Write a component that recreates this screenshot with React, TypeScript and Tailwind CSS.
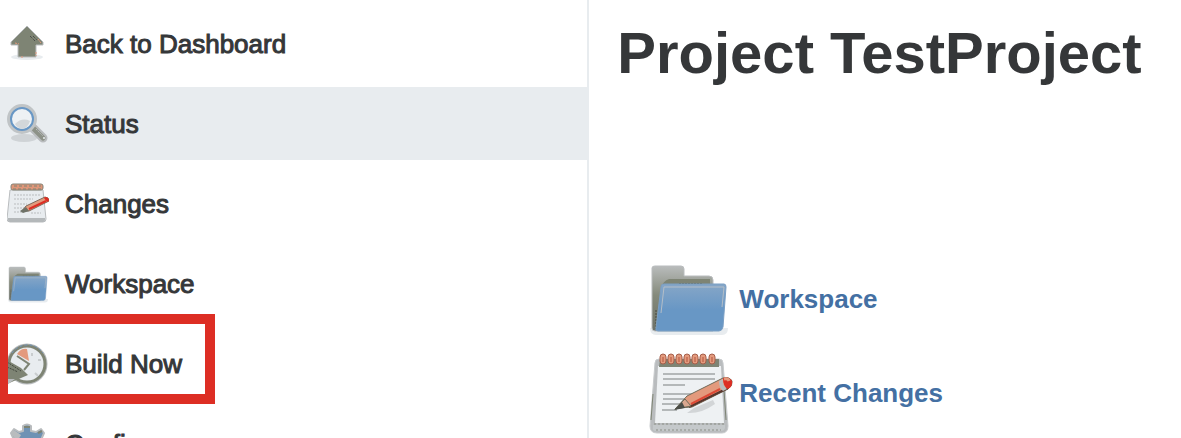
import type { ReactNode } from "react";

function UpIcon() {
  return (
    <svg viewBox="0 0 42 42" className="size-[42px]" aria-hidden="true">
      <ellipse cx="20" cy="34" rx="16" ry="3" fill="#e8ecef" />
      <path d="M20 3 L36 19 V22 H29 V34 H11 V22 H4 V19 Z" fill="#7e8474" stroke="#b9bcbe" strokeWidth="1" strokeLinejoin="round" />
      <path d="M23 13 l5 5 M26 13 l4 4" stroke="#353739" strokeWidth="1" strokeDasharray="1 1" />
      <path d="M8 20 l4 1 M31 16 l3 4 M29 29 v4 M14 34 h3" stroke="#e39a7d" strokeWidth="1" strokeDasharray="2 1" />
    </svg>
  );
}

function SearchIcon() {
  return (
    <svg viewBox="0 0 42 42" className="size-[42px]" aria-hidden="true">
      <ellipse cx="17" cy="35" rx="13" ry="4" fill="#cfd3d6" />
      <path d="M25 24 L36 35" stroke="#b9bcbe" strokeWidth="9" strokeLinecap="round" />
      <path d="M27 26 L36 35" stroke="#8d9288" strokeWidth="5" strokeLinecap="round" />
      <path d="M29 26 L36 33" stroke="#b9bcbe" strokeWidth="1" strokeDasharray="2 1" />
      <circle cx="37" cy="35" r="1" fill="#e8ecef" />
      <circle cx="15" cy="16" r="13" fill="#e8ecef" stroke="#c0c4c6" strokeWidth="4" />
      <circle cx="15" cy="16" r="11" fill="#eef1f4" stroke="#6897c5" strokeWidth="2" />
      <path d="M8 21 Q15 14 23 18 Q21 25 15 26 Q10 25 8 21" fill="#d3d7da" />
    </svg>
  );
}

function NotesIcon() {
  return (
    <svg viewBox="0 0 42 42" className="size-[42px]" aria-hidden="true">
      <path d="M3 7 L36 7 L39 36 Q39 39 36 39 H3 Q0 39 0 36 Z" fill="#e8ecef" stroke="#b9bcbe" strokeWidth="1" />
      <path d="M1 35 H38 V37 Q38 39 36 39 H3 Q1 39 1 37 Z" fill="#b4b8ba" />
      <rect x="4" y="1" width="32" height="6" rx="2" fill="#df9679" stroke="#848376" strokeWidth="1" />
      <path d="M7 3 H34 M6 6 H35" stroke="#7e8474" strokeWidth="1" strokeDasharray="3 2" />
      <path d="M7 12 H33 M7 16 H26 M7 21 H20 M7 25 H17 M7 29 H15 M24 30 H34" stroke="#b9bcbe" strokeWidth="1" strokeDasharray="2 1" />
      <path d="M15 28 L19 23 L38 14 Q42 14 42 18 L22 28 Z" fill="#e39a7d" stroke="#7e6b5c" strokeWidth="1" />
      <path d="M22 26 L39 18" stroke="#dd2e24" strokeWidth="2" />
      <path d="M38 14 Q42 14 42 18 L40 19 L37 15 Z" fill="#dd2e24" />
      <path d="M13 28 L19 24 L22 28 L16 30 Z" fill="#6e7267" />
    </svg>
  );
}

function FolderIcon({ className }: { className: string }) {
  return (
    <svg viewBox="0 0 80 74" className={className} aria-hidden="true">
      <defs>
        <linearGradient id="folder-back" x1="0" y1="0" x2="0" y2="1">
          <stop offset="0" stopColor="#b9bcbc" />
          <stop offset="0.45" stopColor="#858a7b" />
          <stop offset="1" stopColor="#6c7168" />
        </linearGradient>
        <linearGradient id="folder-front" x1="0" y1="0" x2="0" y2="1">
          <stop offset="0" stopColor="#86a6c7" />
          <stop offset="0.55" stopColor="#6897c5" />
          <stop offset="1" stopColor="#6897c5" />
        </linearGradient>
      </defs>
      <path d="M1 66 H79 Q79 73 73 73 H7 Q1 73 1 66" fill="#e8ecef" />
      <path d="M3 6 Q3 4 6 4 H32 Q35 4 35 7 V14 H60 Q64 14 64 18 V69 H6 Q3 69 3 66 Z" fill="url(#folder-back)" stroke="#b9bcbe" strokeWidth="1" />
      <path d="M6 66 L12 26 Q14 19 20 17 H61 V23 H16 L9 69 Z" fill="#7e8474" />
      <path d="M7 48 V67 M30 22 H53" stroke="#44483f" strokeWidth="1" strokeDasharray="2 1" />
      <path d="M12 25 Q12 22 15 22 H75 Q77 22 77 25 L74 65 Q73 69 70 69 H9 Q6 69 7 66 Z" fill="url(#folder-front)" stroke="#7b9fc4" strokeWidth="1" />
      <path d="M12 51 L15 25 H75 L73 45" fill="none" stroke="#b4bec8" strokeWidth="1" />
    </svg>
  );
}

function NotepadIcon() {
  return (
    <svg viewBox="0 0 86 86" className="h-[86px] w-[86px]" aria-hidden="true">
      <path d="M6 13 Q6 9 10 9 H70 Q74 9 74 13 L79 76 Q79 83 73 83 H8 Q1 83 1 76 Z" fill="#b9bcbe" stroke="#c8cbcd" strokeWidth="1" />
      <path d="M9 16 H72 L75 73 H6 Z" fill="#eef1f3" />
      <path d="M4 75 H76 V78 Q75 81 72 81 H7 Q3 81 4 77 Z" fill="#c4c8ca" />
      <path d="M5 74 H75 M7 80 H72" stroke="#8b8f86" strokeWidth="1" strokeDasharray="2 2" />
      <path d="M4 44 L2 70 M75 40 L77 70" stroke="#7e8474" strokeWidth="1" />
      <path d="M11 9 H70 V17 H10 Z" fill="#7e8474" />
      <g fill="#e39a7d" stroke="#a65f4b" strokeWidth="1">
        <rect x="11" y="4" width="6" height="10" rx="3" />
        <rect x="19" y="4" width="6" height="10" rx="3" />
        <rect x="27" y="4" width="6" height="10" rx="3" />
        <rect x="35" y="4" width="6" height="10" rx="3" />
        <rect x="43" y="4" width="6" height="10" rx="3" />
        <rect x="51" y="4" width="6" height="10" rx="3" />
        <rect x="60" y="4" width="6" height="10" rx="3" />
      </g>
      <path d="M14 7 V12 M22 7 V12 M30 7 V12 M38 7 V12 M46 7 V12 M54 7 V12 M63 7 V12" stroke="#b5523d" strokeWidth="1" />
      <path d="M14 24 H66 M14 29 H66 M14 35 H36 M14 44 H45 M14 49 H40 M13 54 H36 M13 60 H28" stroke="#b4b8b9" strokeWidth="2" />
      <path d="M38 63 Q52 64 66 54 L64 50 L45 58 Z" fill="#d2d5d7" />
      <path d="M27 58 L38 46 L74 28 Q80 26 83 31 Q84 36 79 39 L43 57 Z" fill="#e39a7d" stroke="#6f6a58" strokeWidth="1" />
      <path d="M40 57 L79 38" stroke="#59352c" strokeWidth="2" />
      <path d="M42 54 L71 39" stroke="#dd4a36" strokeWidth="2" />
      <path d="M74 28 Q80 26 83 31 Q84 36 79 39 Q74 37 74 28 Z" fill="#dd2e24" />
      <path d="M75 29 Q79 28 80 31" fill="none" stroke="#e39a7d" strokeWidth="3" />
      <path d="M70 31 L74 29 Q73 35 78 39 L74 41 Q70 38 70 31" fill="#b9bcbe" />
      <path d="M26 59 L36 49 L42 56 Z" fill="#d9a78f" stroke="#6f6a58" strokeWidth="1" />
      <path d="M25 60 L33 52 L36 58 Z" fill="#4b4e48" />
    </svg>
  );
}

function ClockIcon() {
  return (
    <svg viewBox="0 0 42 42" className="size-[42px]" aria-hidden="true">
      <circle cx="20" cy="21" r="19" fill="#e8ecef" stroke="#b9bcbe" strokeWidth="3" />
      <circle cx="20" cy="21" r="18" fill="#e8ecef" stroke="#7e8474" strokeWidth="3" />
      <path d="M5 10 Q12 1 23 2 Q31 3 36 10" fill="none" stroke="#7396ba" strokeWidth="1" strokeDasharray="3 2" />
      <path d="M22 18 L10 11 Q14 5 20 6 Z" fill="#e39a7d" />
      <path d="M10 13 L22 21 L17 27" fill="none" stroke="#7e8474" strokeWidth="2" />
      <path d="M25 10 v3 M31 17 h3 M28 30 l3 3" stroke="#c9cdcf" strokeWidth="2" />
      <path d="M0 17 L14 25 L21 32 L0 41 Z" fill="#7e8474" />
      <path d="M0 19 L14 28 M0 24 L11 29" stroke="#44483f" strokeWidth="1" strokeDasharray="2 1" />
      <path d="M0 36 L8 36 L0 42 Z" fill="#b9bcbe" />
    </svg>
  );
}

function GearIcon() {
  return (
    <svg viewBox="0 0 42 42" className="size-[42px]" aria-hidden="true">
      <path d="M16 3 Q20 0 24 3 V8 L29 9 L34 6 L37 10 L34 17 L36 22 H41 V29 H35 L30 35 L20 38 L10 35 L5 29 H1 V22 H5 L7 17 L4 10 L7 6 L12 9 L16 8 Z" fill="#6f92b4" stroke="#b9bcbe" strokeWidth="2" strokeLinejoin="round" />
      <path d="M4 10 L7 7 L14 12 L10 19 Z" fill="#b9bcbe" />
      <path d="M17 4 H23 M31 10 L35 8" stroke="#7e8474" strokeWidth="2" />
      <circle cx="20" cy="24" r="6" fill="#e8ecef" />
    </svg>
  );
}

type Task = { label: string; icon: ReactNode; active?: boolean; marked?: boolean };

const tasks: Task[] = [
  { label: "Back to Dashboard", icon: <UpIcon /> },
  { label: "Status", icon: <SearchIcon />, active: true },
  { label: "Changes", icon: <NotesIcon /> },
  { label: "Workspace", icon: <FolderIcon className="h-[38px] w-[42px]" /> },
  { label: "Build Now", icon: <ClockIcon />, marked: true },
  { label: "Configure", icon: <GearIcon /> },
];

const links = [
  { label: "Workspace", icon: <FolderIcon className="h-[74px] w-20" /> },
  { label: "Recent Changes", icon: <NotepadIcon /> },
];

export default function App() {
  return (
    <div className="flex h-screen overflow-hidden bg-white font-['Liberation_Sans',Arial,sans-serif] text-[#353739]">
      <nav aria-label="Project tasks" className="w-[49.9%] shrink-0 border-r-2 border-[#e8ecef]">
        <ul className="flex flex-col gap-[7px] pt-[7px]">
          {tasks.map((task) => (
            <li key={task.label} className="relative">
              <a
                href="#"
                aria-current={task.active ? "page" : undefined}
                className={`flex h-[73px] items-center gap-4 pl-[7px] text-[26px] leading-8 [-webkit-text-stroke:1px_#353739] ${task.active ? "bg-[#e8ecef]" : ""}`}
              >
                {task.icon}
                <span>{task.label}</span>
              </a>
              {task.marked && (
                <div className="pointer-events-none absolute -top-[13px] left-0 h-[90px] w-[215px] border-10 border-l-8 border-[#dd2e24]" />
              )}
            </li>
          ))}
        </ul>
      </nav>
      <main className="min-w-0 flex-1 pl-7 pt-5">
        <h1 className="text-[58px] leading-[66px] font-bold whitespace-nowrap">Project TestProject</h1>
        <ul className="mt-[170px] flex flex-col gap-2 pl-8">
          {links.map((link) => (
            <li key={link.label}>
              <a href="#" className="flex h-[86px] items-center text-[26px] leading-8 font-bold text-[#4470a3]">
                <span className="flex w-[90px] shrink-0">{link.icon}</span>
                <span>{link.label}</span>
              </a>
            </li>
          ))}
        </ul>
      </main>
    </div>
  );
}
